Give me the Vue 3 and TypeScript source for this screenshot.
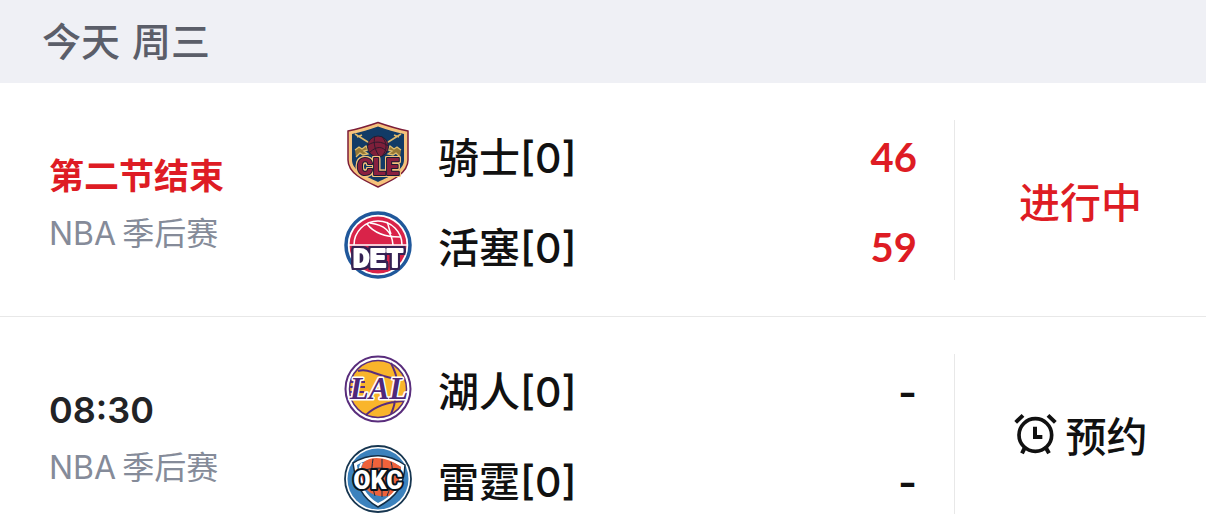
<script setup lang="ts">
interface Team {
  code: 'CLE' | 'DET' | 'LAL' | 'OKC'
  name: string
  score: string
}

interface Game {
  id: number
  headline: string
  live: boolean
  teams: Team[]
}

const games: Game[] = [
  {
    id: 1,
    headline: '第二节结束',
    live: true,
    teams: [
      { code: 'CLE', name: '骑士[0]', score: '46' },
      { code: 'DET', name: '活塞[0]', score: '59' },
    ],
  },
  {
    id: 2,
    headline: '08:30',
    live: false,
    teams: [
      { code: 'LAL', name: '湖人[0]', score: '-' },
      { code: 'OKC', name: '雷霆[0]', score: '-' },
    ],
  },
]
</script>

<template>
  <main class="schedule">
    <h1 class="day"><span>今天</span><span>周三</span></h1>
    <section v-for="game in games" :key="game.id" class="game" :class="{ live: game.live }">
      <div class="info">
        <div class="headline">{{ game.headline }}</div>
        <div class="league"><span>NBA</span><span>季后赛</span></div>
      </div>
      <div class="teams">
        <div v-for="team in game.teams" :key="team.code" class="team">
          <svg v-if="team.code === 'CLE'" class="logo" viewBox="5 5 70 70" aria-hidden="true">
            <path d="M40 7.5C30 11 20 14 10 16V45C10 58 25 65 40 72C55 65 70 58 70 45V16C60 14 50 11 40 7.5Z" fill="#f5c27c" stroke="#7c1d38" stroke-width="1.500" />
            <path d="M40 11.500C31 15 23 17 14 19V45C14 55 27 61 40 67C53 61 66 55 66 45V19C57 17 49 15 40 11.500Z" fill="#123b66" />
            <path d="M17 19L33 29M63 19L47 29M19 22L24 20M61 22L56 20" stroke="#dfb86a" stroke-width="1.600" fill="none" />
            <path d="M17 35l4-3 3 2 4-3 2 4-4 1 4 3-5 1-3-2-4 4M63 35l-4-3-3 2-4-3-2 4 4 1-4 3 5 1 3-2 4 4" fill="#967836" stroke="#e0bd6c" stroke-width="1.300" />
            <circle cx="40" cy="31.500" r="10.500" fill="#7e1f3a" stroke="#17233c" stroke-width="1" />
            <path d="M30 30C36 26 44 26 50 31M32 37C39 31 44 31 49 37M37 21C35 28 37 36 42 42M43 21C50 27 49 36 44 41" fill="none" stroke="#301a2e" stroke-width="1" />
            <text x="40" y="60" text-anchor="middle" class="mark cle">CLE</text>
          </svg>
          <svg v-else-if="team.code === 'DET'" class="logo" viewBox="5 5 70 70" aria-hidden="true">
            <circle cx="40" cy="40" r="32" fill="#fff" stroke="#20589b" stroke-width="3.500" />
            <circle cx="40" cy="40" r="28.500" fill="#d92349" />
            <path d="M16 40A24 24 0 0 1 64 40" fill="none" stroke="#fff" stroke-width="1.500" />
            <path d="M29 19C36 28 47 32 62 32M32 18C46 20 54 26 55 40M49 17C51 21 51 25 53 29" fill="none" stroke="#fff" stroke-width="1.500" />
            <path d="M11 40H69" stroke="#fff" stroke-width="1.500" />
            <text x="40" y="62" text-anchor="middle" class="mark det">DET</text>
          </svg>
          <svg v-else-if="team.code === 'LAL'" class="logo" viewBox="5 5 70 70" aria-hidden="true">
            <circle cx="40" cy="40" r="32.500" fill="#fff" stroke="#592d7c" stroke-width="2" />
            <circle cx="40" cy="40" r="28.500" fill="#f9b52b" stroke="#592d7c" stroke-width="1.500" />
            <path d="M20 22C33 18 43 31 66 30M53 14C57 23 60 28 58 38M12 33H27M12 38H27M12 43H26M28 66C35 59 45 53 66 52M57 50C57 56 55 60 53 65" fill="none" stroke="#592d7c" stroke-width="2" />
            <text x="41" y="50" text-anchor="middle" class="mark lal">LAL</text>
          </svg>
          <svg v-else class="logo" viewBox="5 5 70 70" aria-hidden="true">
            <circle cx="40" cy="40" r="33" fill="#fff" stroke="#173650" stroke-width="1.800" />
            <circle cx="40" cy="40" r="30.500" fill="#3c82bd" />
            <path d="M15 24C31 14 50 14 67 26C66 48 58 58 40 68C25 60 18 47 15 24Z" fill="#fff" stroke="#112d46" stroke-width="1.500" />
            <path d="M19 26C32 18 48 18 63 28C62 46 55 57 40 64C29 58 21 46 19 26Z" fill="#3c82bd" />
            <path d="M25 24C33 16 49 18 63 28C62 43 58 52 51 57C43 58 35 57 29 51C22 43 21 32 25 24Z" fill="#ee623b" />
            <path d="M35 20C33 32 33 44 37 57M44 20V58M53 23C56 32 54 45 49 57M24 32C35 28 48 28 62 33" fill="none" stroke="#112d46" stroke-width="1" />
            <path d="M24 24C19 31 23 43 27 48" fill="none" stroke="#fff" stroke-width="2" />
            <text x="40" y="50" text-anchor="middle" class="mark okc">OKC</text>
          </svg>
          <span class="name">{{ team.name }}</span>
          <span class="score">{{ team.score }}</span>
        </div>
      </div>
      <div class="action">
        <span v-if="game.live" class="state">进行中</span>
        <button v-else type="button" class="remind">
          <svg class="clock" viewBox="44 66 129 129" aria-hidden="true">
            <circle cx="108" cy="132" r="49" fill="none" stroke="currentColor" stroke-width="11" />
            <path d="M49 94L71 73M146 73L168 94M76 171L68 187M140 171L149 187" stroke="currentColor" stroke-width="12" />
            <path d="M107 107V138H129" fill="none" stroke="currentColor" stroke-width="12" />
          </svg>
          <span>预约</span>
        </button>
      </div>
    </section>
  </main>
</template>

<style>
body {
  margin: 0;
  background: #fff;
}
</style>

<style scoped>
.schedule {
  height: 100vh;
  overflow: hidden;
  color: #111;
  background: #fff;
  font-family: Inter, "Noto Sans CJK SC", sans-serif;
}
.day {
  display: flex;
  gap: 12px;
  margin: 0;
  padding: 0 42px;
  line-height: 83px;
  background: #eff0f5;
  color: #5b5e69;
  font-size: 39px;
  font-weight: 500;
}
.game {
  display: flex;
  padding: 37px 0 36px;
  border-bottom: 1px solid #e8e8e8;
}
.info {
  box-sizing: border-box;
  flex: 0 0 343px;
  padding: 28px 0 0 49px;
  white-space: nowrap;
}
.headline {
  line-height: 57px;
  font-size: 36px;
  font-weight: 600;
  color: #222326;
}
.live .headline {
  font-size: 35px;
  color: #de1c24;
}
.league {
  display: flex;
  gap: 6px;
  line-height: 57px;
  font-size: 32px;
  color: #858b99;
}
.teams {
  flex: 1;
  display: flex;
  flex-direction: column;
  gap: 20px;
  padding-right: 37px;
}
.team {
  display: flex;
  align-items: center;
  height: 70px;
}
.logo {
  flex: none;
  width: 70px;
  height: 70px;
}
.mark {
  paint-order: stroke;
  stroke-linejoin: round;
  font-weight: 700;
}
.cle {
  font-family: Roboto, sans-serif;
  font-size: 24px;
  font-weight: 900;
  fill: #8b203f;
  stroke: #1c1b35;
  stroke-width: 2px;
  filter: drop-shadow(1px 0 #f3c17c) drop-shadow(-1px 0 #f3c17c) drop-shadow(0 1px #f3c17c) drop-shadow(0 -1px #f3c17c);
}
.det {
  font-family: "Liberation Mono", monospace;
  font-size: 28px;
  fill: #fff;
  stroke: #fff;
  stroke-width: 2px;
  filter: drop-shadow(2px 0 #352254) drop-shadow(-2px 0 #352254) drop-shadow(0 2px #352254) drop-shadow(0 -2px #352254);
}
.lal {
  font-family: "Liberation Serif", serif;
  font-style: italic;
  font-size: 31px;
  fill: #4f287a;
  stroke: #fff;
  stroke-width: 3px;
}
.okc {
  font-family: Roboto, sans-serif;
  font-weight: 900;
  font-size: 25px;
  fill: #fff;
  stroke: #07131d;
  stroke-width: 4px;
}
.name {
  flex: 1;
  margin-left: 25px;
  padding-top: 6px;
  font-size: 41px;
  font-weight: 500;
  line-height: 64px;
}
.score {
  padding-top: 6px;
  font-size: 41px;
  font-weight: 600;
  line-height: 64px;
}
.live .score {
  padding-top: 4px;
  font-family: Lato, sans-serif;
  font-size: 40px;
  font-weight: 700;
}
.live .score,
.state {
  color: #de1c24;
}
.action {
  box-sizing: border-box;
  flex: 0 0 252px;
  display: flex;
  align-items: center;
  justify-content: center;
  border-left: 1px solid #e8e8e8;
}
.state,
.remind {
  font-size: 41px;
  font-weight: 500;
  line-height: 60px;
}
.state,
.remind span {
  padding-top: 5px;
}
.remind {
  display: flex;
  align-items: center;
  gap: 9px;
  padding: 0;
  border: 0;
  background: none;
  color: #111;
  font-family: inherit;
}
.clock {
  width: 43px;
  height: 43px;
}
</style>
